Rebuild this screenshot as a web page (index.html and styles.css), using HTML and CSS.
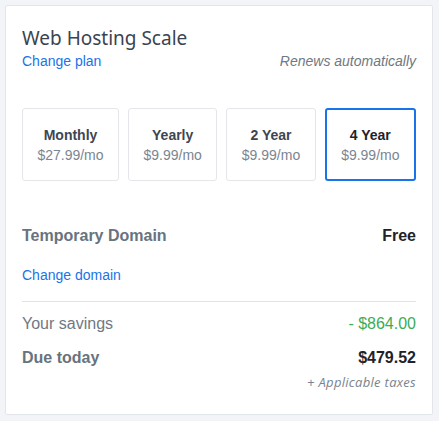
FILE: index.html
```html
<!DOCTYPE html>
<html>
<head>
<meta charset="utf-8">
<link rel="stylesheet" href="styles.css">
</head>
<body>
<div class="card">
  <h1 class="title">Web Hosting Scale</h1>
  <div class="sub-row">
    <a class="link" href="#">Change plan</a>
    <span class="renews">Renews automatically</span>
  </div>
  <div class="plans">
    <div class="plan plan-wide"><div class="plan-name">Monthly</div><div class="plan-price">$27.99/mo</div></div>
    <div class="plan"><div class="plan-name">Yearly</div><div class="plan-price">$9.99/mo</div></div>
    <div class="plan"><div class="plan-name">2 Year</div><div class="plan-price">$9.99/mo</div></div>
    <div class="plan selected"><div class="plan-name">4 Year</div><div class="plan-price">$9.99/mo</div></div>
  </div>
  <div class="row domain-row">
    <span class="label-bold">Temporary Domain</span>
    <span class="value-bold">Free</span>
  </div>
  <a class="link domain-link" href="#">Change domain</a>
  <div class="divider"></div>
  <div class="row savings-row">
    <span class="label">Your savings</span>
    <span class="savings">- $864.00</span>
  </div>
  <div class="row due-row">
    <span class="label-bold">Due today</span>
    <span class="value-bold">$479.52</span>
  </div>
  <div class="taxes">+ Applicable taxes</div>
</div>
</body>
</html>
```
FILE: styles.css
```css
html, body {
  margin: 0;
  padding: 0;
  background: #f3f4f8;
  font-family: "Liberation Sans", Arial, sans-serif;
}
body {
  padding: 5px 0 0 5px;
}
.card {
  width: 394px;
  height: 372px;
  background: #ffffff;
  border: 1px solid #e2e5ea;
  border-radius: 2px;
  padding: 20px 16px 16px 16px;
}
.title {
  margin: 0;
  font-family: "Noto Sans", "Open Sans", sans-serif;
  font-weight: 400;
  font-size: 19px;
  line-height: 24px;
  color: #3b4350;
}
.sub-row {
  display: flex;
  justify-content: space-between;
  align-items: baseline;
  margin-top: 2px;
}
.link {
  color: #1a73e8;
  text-decoration: none;
  font-size: 14px;
  line-height: 18px;
}
.renews {
  font-style: italic;
  font-size: 14px;
  color: #6f7883;
}
.plans {
  display: flex;
  gap: 9px;
  margin-top: 38px;
}
.plan {
  flex: 1 1 0;
  height: 71px;
  border: 1px solid #e4e6ea;
  border-radius: 3px;
  display: flex;
  flex-direction: column;
  align-items: center;
  justify-content: center;
  gap: 4px;
}
.plan-wide {
  flex: 0 0 95px;
}
.plan.selected {
  border: 2px solid #1a73e8;
  height: 69px;
}
.plan-name {
  font-weight: 700;
  font-size: 14px;
  color: #3d4652;
  line-height: 16px;
}
.plan.selected .plan-name {
  color: #1f2329;
}
.plan-price {
  font-size: 14px;
  color: #7b8590;
  line-height: 16px;
}
.row {
  display: flex;
  justify-content: space-between;
  align-items: baseline;
}
.domain-row {
  margin-top: 46px;
}
.label-bold {
  font-weight: 700;
  font-size: 16px;
  color: #67737e;
}
.value-bold {
  font-weight: 700;
  font-size: 16px;
  color: #1f2329;
}
.domain-link {
  display: block;
  margin-top: 21px;
}
.divider {
  height: 1px;
  background: #e2e4e8;
  margin-top: 17px;
}
.savings-row {
  margin-top: 13px;
}
.label {
  font-size: 16px;
  color: #6f7883;
}
.savings {
  font-size: 16px;
  color: #3aad55;
}
.due-row {
  margin-top: 16px;
}
.taxes {
  text-align: right;
  font-family: "Open Sans", sans-serif;
  font-style: italic;
  font-size: 13px;
  letter-spacing: 0.3px;
  color: #7a838d;
  margin-top: 6px;
}
```
